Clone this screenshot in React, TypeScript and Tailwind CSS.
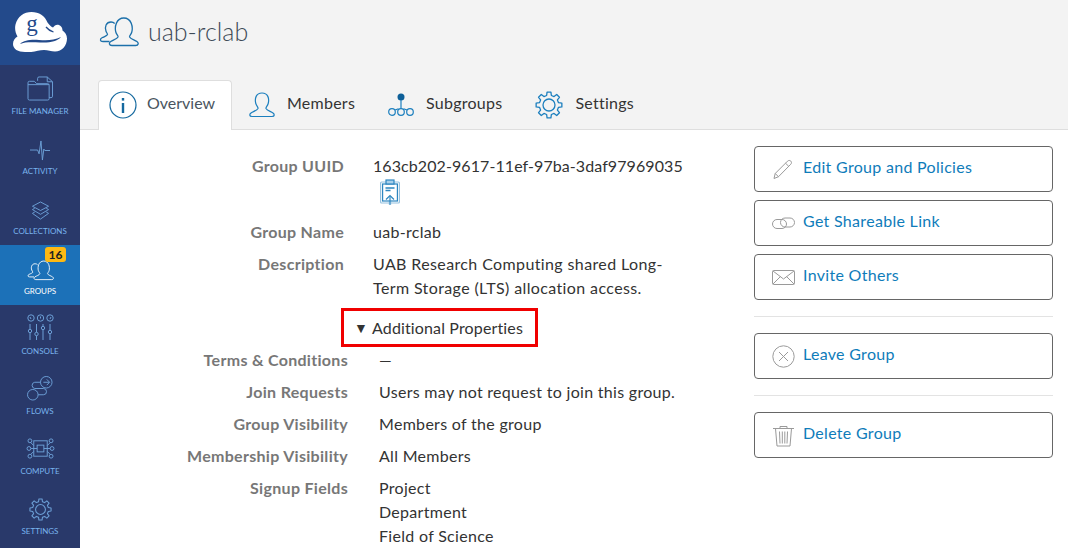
import React from 'react';

const FONT = { fontFamily: '"Lato", "Noto Sans", sans-serif' };

const PeopleIcon: React.FC<{ className?: string }> = ({ className }) => (
    <svg viewBox="0 0 40 30" fill="none" stroke="currentColor" strokeWidth="1.300" className={className}>
        <path d="M10.500 24.500H4c-3.200 0-3.200-2.500-1-3.700 2.500-1.300 5-1.800 5.500-3.300.2-.8-1-1.700-1.500-3.200C5.500 10 7 5 12 5c1.500 0 2.800.5 3.700 1.500" />
        <path d="M13 28.500c-3 0-3.300-2.700-1.300-4 2.500-1.700 6.300-2.500 7.300-4.500.5-1.200-1.500-2.500-2.200-5-1.300-5 .3-14 8-14s9.300 9 8 14c-.7 2.500-2.700 3.800-2.200 5 1 2 4.800 2.800 7.300 4.500 2 1.300 1.700 4-1.300 4z" />
    </svg>
);

// 8 tooth cog outline on a 28 box
const gearPath = (() => {
    const pts: string[] = [];
    for (let i = 0; i < 8; i++) {
        const a = (i * Math.PI) / 4 - Math.PI / 2;
        const step = Math.PI / 8;
        const p = (r: number, t: number) => `${(14 + r * Math.cos(t)).toFixed(2)} ${(14 + r * Math.sin(t)).toFixed(2)}`;
        pts.push(`${i === 0 ? 'M' : 'L'}${p(9.8, a - step * 0.62)}`, `L${p(13, a - step * 0.38)}`, `L${p(13, a + step * 0.38)}`, `L${p(9.8, a + step * 0.62)}`);
    }
    return pts.join(' ') + 'Z';
})();

const GearIcon: React.FC<{ className?: string; strokeWidth?: number }> = ({ className, strokeWidth = 1.300 }) => (
    <svg viewBox="0 0 28 28" fill="none" stroke="currentColor" strokeWidth={strokeWidth} strokeLinejoin="round" className={className}>
        <path d={gearPath} />
        <circle cx="14" cy="14" r="6" />
    </svg>
);

const navItems: { label: string; icon: React.ReactNode; active?: boolean; badge?: string }[] = [
    {
        label: 'File Manager',
        icon: (
            <svg viewBox="0 0 28 26" fill="none" stroke="currentColor" strokeWidth="1" className="w-[27px] h-[25px]">
                <path d="M11 5V2.500A1.500 1.500 0 0 1 12.500 1H21l5.500 5v15a1.500 1.500 0 0 1-1.500 1.500h-2" />
                <path d="M21 1v5h5.500" />
                <path d="M1 7a1.500 1.500 0 0 1 1.500-1.500h5L10 8h11.500A1.500 1.500 0 0 1 23 9.500V23.500a1.500 1.500 0 0 1-1.500 1.500h-19A1.500 1.500 0 0 1 1 23.500z" />
                <path d="M1 9h22" />
            </svg>
        ),
    },
    {
        label: 'Activity',
        icon: (
            <svg viewBox="0 0 22 22" fill="none" stroke="currentColor" strokeWidth="1" className="w-[21px] h-[21px]">
                <path d="M0 10.500h8l1.500 4 2-13.500 1.500 20 1.500-11.500 1 1.500H21" />
            </svg>
        ),
    },
    {
        label: 'Collections',
        icon: (
            <svg viewBox="0 0 20 21" fill="none" stroke="currentColor" strokeWidth="1" className="w-[19px] h-[20px]">
                <path d="M10 1l8.500 4.500L10 10 1.500 5.500z" />
                <path d="M4 7.500L1.500 9 10 14l8.500-5L16 7.500" />
                <path d="M4 11.500L1.500 13 10 19l8.500-6L16 11.500" />
            </svg>
        ),
    },
    { label: 'Groups', active: true, badge: '16', icon: <PeopleIcon className="w-[27px] h-[21px]" /> },
    {
        label: 'Console',
        icon: (
            <svg viewBox="0 0 27 27" fill="none" stroke="currentColor" strokeWidth="1" className="w-[27px] h-[27px]">
                <circle cx="4" cy="4" r="3.200" /><circle cx="13.500" cy="4" r="3.200" /><circle cx="23" cy="4" r="3.200" />
                <path d="M3 3l1 2M13.500 2.500v2M24 3l-1 2" />
                <path d="M3 10v16M9.500 10v16M16 10v16M23 10v16" />
                <circle cx="3" cy="17" r="1.700" fill="#29396a" /><circle cx="9.500" cy="20" r="1.700" fill="#29396a" />
                <circle cx="16" cy="14" r="1.700" fill="#29396a" /><circle cx="23" cy="18" r="1.700" fill="#29396a" />
            </svg>
        ),
    },
    {
        label: 'Flows',
        icon: (
            <svg viewBox="0 0 28 26" fill="none" stroke="currentColor" strokeWidth="1" className="w-[27px] h-[25px]">
                <circle cx="20" cy="6.500" r="6" />
                <circle cx="6" cy="19.500" r="5.500" />
                <path d="M14 6.500H8a3.300 3.300 0 0 0 0 6.500h9a3.200 3.200 0 0 1 0 6.500h-5.500" />
                <path d="M17 6.500h6M20.500 3.500l3 3-3 3" />
            </svg>
        ),
    },
    {
        label: 'Compute',
        icon: (
            <svg viewBox="0 0 30 26" fill="none" stroke="currentColor" strokeWidth="1" className="w-[29px] h-[25px]">
                <rect x="8" y="5" width="14" height="16" />
                <rect x="11.500" y="9.500" width="7" height="7" />
                <path d="M5 13h6.500M18.500 13H25M5 7l3 3M25 7l-3 3M5 19l3-3M25 19l-3-3" />
                <circle cx="4" cy="5" r="2" /><circle cx="26" cy="5" r="2" />
                <circle cx="3" cy="13" r="2" /><circle cx="27" cy="13" r="2" />
                <circle cx="4" cy="21" r="2" /><circle cx="26" cy="21" r="2" />
            </svg>
        ),
    },
    { label: 'Settings', icon: <GearIcon className="w-[23px] h-[23px]" /> },
];

const Sidebar: React.FC = () => (
    <div className="w-20 shrink-0 bg-[#29396a] flex flex-col">
        <div className="h-[65px] pl-[13px] pb-[1px] bg-[#234a8b] flex items-center">
            <svg viewBox="0 0 54 40" className="w-[54px] h-[40px]">
                <path fill="#fff" d="M12 40C5 40 0 37 0 32c0-3.500 2-6 4.500-7.500C2.500 21 1.500 17 2.500 12.500 4.500 4.500 11 0 18.500 0 26 0 32 4 34.500 10.500c1.500 2 3.500 4.500 5.500 5 1.500-2 3.500-3.500 6-2.500 2.500 1 3.500 3 3.500 5.500 2.500 1.500 4.500 4.500 4.500 8 0 7-5 13-12 13-4 0-7-1.500-11-1.500-6 0-11 2.500-19 2.500z" />
                <path fill="#234a8b" d="M7 32c4-4 11-4.500 19-4s15 .5 22-3c-4 4.500-11 6-21 5.500-8-.4-15-.7-20 1.500z" />
                <path fill="none" stroke="#234a8b" strokeWidth="1.300" d="M33 15c2 2.500 4 4 7.500 5" />
                <text x="19" y="19" fontSize="23" textAnchor="middle" fill="#234a8b" style={{ fontFamily: '"Liberation Serif", serif' }}>g</text>
            </svg>
        </div>
        {navItems.map(item => (
            <div
                key={item.label}
                className={`relative h-[60px] flex flex-col items-center justify-end pb-[9px] ${item.active ? 'bg-[#1c71b8] text-white' : 'text-[#6c9fd6]'}`}
            >
                {item.badge && (
                    <span className="absolute top-[2px] left-[45px] w-[21px] h-[15px] rounded-[3px] bg-[#fdb913] text-[#222] text-[12px] font-bold leading-[15px] text-center">
                        {item.badge}
                    </span>
                )}
                <div className="flex-1 flex items-end justify-center pb-[5px]">{item.icon}</div>
                <span className={`uppercase text-[8px] leading-[10px] ${item.active ? 'text-white' : 'text-[#79b4ee]'}`}>{item.label}</span>
            </div>
        ))}
    </div>
);

const tabs = [
    {
        label: 'Overview',
        active: true,
        icon: (
            <svg viewBox="0 0 28 28" className="w-[28px] h-[28px] text-[#15699f]" fill="none" stroke="currentColor">
                <circle cx="14" cy="14" r="13" strokeWidth="1.200" />
                <rect x="12.800" y="12" width="2.400" height="10" fill="currentColor" stroke="none" />
                <rect x="12.800" y="7" width="2.400" height="2.600" fill="currentColor" stroke="none" />
            </svg>
        ),
    },
    {
        label: 'Members',
        icon: (
            <svg viewBox="0 0 26 26" className="w-[26px] h-[26px] text-[#1c7fbe]" fill="none" stroke="currentColor" strokeWidth="1.200">
                <path d="M3 24.500c-3 0-2.500-2.500-1-3.500 2.500-1.700 6-2.500 7-4.500.5-1.200-1.500-2.500-2.200-5C5.500 6.500 7 1 13 1s7.500 5.500 6.200 10.500c-.7 2.500-2.700 3.800-2.200 5 1 2 4.500 2.800 7 4.500 1.500 1 2 3.500-1 3.500z" />
            </svg>
        ),
    },
    {
        label: 'Subgroups',
        icon: (
            <svg viewBox="0 0 26 26" className="w-[26px] h-[26px] text-[#1c7fbe]" fill="none" stroke="currentColor" strokeWidth="1.200">
                <circle cx="13" cy="5" r="3.500" fill="#0d5f98" stroke="none" />
                <path d="M13 8v8.700M7 18l3.500-1.300M19 18l-3.500-1.300" />
                <circle cx="4" cy="20" r="3.300" /><circle cx="13" cy="20" r="3.300" /><circle cx="22" cy="20" r="3.300" />
            </svg>
        ),
    },
    { label: 'Settings', icon: <GearIcon className="w-[28px] h-[28px] text-[#1c7fbe]" /> },
];

const Tabs: React.FC = () => (
    <div className="h-[50px] pl-[18px] flex border-b border-[#dedede]">
        {tabs.map(tab => (
            <div
                key={tab.label}
                className={
                    tab.active
                        ? 'h-[50px] w-[134px] pl-[10px] pb-[1px] flex items-center gap-[10px] bg-white border border-b-0 border-[#dedede] rounded-t-[4px] text-[#4a5560]'
                        : 'h-[49px] pl-[17px] pr-[16px] flex items-center gap-[12px] text-[#333] tracking-[0.25px]'
                }
            >
                {tab.icon}
                <span className="text-[16px] pb-[4px]">{tab.label}</span>
            </div>
        ))}
    </div>
);

const Row: React.FC<{ label: string; labelClass: string; children: React.ReactNode; className?: string }> = ({ label, labelClass, children, className = 'mb-2' }) => (
    <div className={`flex text-[16px] leading-[24px] tracking-[0.3px] ${className}`}>
        <div className={`shrink-0 text-right font-bold text-[#777] ${labelClass}`}>{label}</div>
        <div className="text-[#333]">{children}</div>
    </div>
);

const actionGroups = [
    [
        {
            label: 'Edit Group and Policies',
            icon: (
                <path d="M2 20.500l1.200-5L15.500 3.200c1-1 2.500-1 3.300-.1.900.9.900 2.200 0 3.100L6.500 18.700zM3.200 15.500l3.300 3.200M13.500 5.200l3.300 3.200" />
            ),
        },
        {
            label: 'Get Shareable Link',
            icon: (
                <>
                    <rect x="0.500" y="7.500" width="14" height="9" rx="4.500" />
                    <rect x="8.500" y="6" width="14" height="9" rx="4.500" />
                </>
            ),
        },
        {
            label: 'Invite Others',
            icon: (
                <>
                    <rect x="0.500" y="4.500" width="22" height="14" rx="1" />
                    <path d="M1 5l10.500 8L22 5M1 18l7.500-7.500M22 18l-7.500-7.500" />
                </>
            ),
        },
    ],
    [
        {
            label: 'Leave Group',
            icon: (
                <>
                    <circle cx="11.500" cy="11.500" r="10.700" />
                    <path d="M7 7l9 9M16 7l-9 9" />
                </>
            ),
        },
    ],
    [
        {
            label: 'Delete Group',
            icon: (
                <>
                    <path d="M1 4.500h21M8 4.500V2.500h7v2M3.500 4.500l1.500 17.500h13l1.500-17.500" />
                    <path d="M7.500 7.500l.5 12M10.300 7.500v12M12.800 7.500v12M15.500 7.500l-.5 12" />
                </>
            ),
        },
    ],
];

const Actions: React.FC = () => (
    <div className="w-[299px] flex flex-col">
        {actionGroups.map((group, i) => (
            <div key={i} className={i > 0 ? 'border-t border-[#e3e3e3] mt-4 pt-4' : ''}>
                <div className="flex flex-col gap-2">
                    {group.map(action => (
                        <div key={action.label} className="h-[46px] pl-[17px] flex items-center gap-[8px] border border-[#666] rounded-[4px] text-[16px] tracking-[0.3px] text-[#0f7cba]">
                            <svg viewBox="0 0 23 23" className="w-[23px] h-[23px] text-[#9a9a9a]" fill="none" stroke="currentColor" strokeWidth="1">
                                {action.icon}
                            </svg>
                            <span className="pb-[4px]">{action.label}</span>
                        </div>
                    ))}
                </div>
            </div>
        ))}
    </div>
);

const App: React.FC = () => (
    <div className="h-[548px] w-[1068px] flex overflow-hidden bg-white" style={FONT}>
        <Sidebar />
        <div className="flex-1 min-w-0 flex flex-col">
            <div className="bg-[#f3f3f3]">
                <div className="h-[80px] pl-[19px] pb-[16px] flex items-center gap-[9px]">
                    <PeopleIcon className="w-[40px] h-[30px] text-[#1c70aa]" />
                    <h1 className="text-[25px] font-light text-[#3d4a57]">uab-rclab</h1>
                </div>
                <Tabs />
            </div>
            <div className="flex-1 flex pt-[24px]">
                <div className="w-[674px] shrink-0">
                    <Row label="Group UUID" labelClass="w-[264px] mr-[29px]" className="mb-[15px]">
                        <div className="tracking-[0.08px]">163cb202-9617-11ef-97ba-3daf97969035</div>
                        <svg viewBox="0 0 20 26" className="w-[20px] h-[26px] mt-[1px] ml-[7px] text-[#2d86c0]" fill="none" stroke="currentColor" strokeWidth="1.200">
                            <rect x="0.600" y="3" width="18.800" height="21" rx="1" opacity="0.5" />
                            <rect x="2.600" y="5" width="14.800" height="17" />
                            <rect x="6" y="1" width="8" height="4" fill="#a9d0ea" />
                            <path d="M5.500 9h9M5.500 11.500h5" strokeWidth="1.500" />
                            <path d="M10 26v-9" strokeWidth="2.200" opacity="0.6" />
                            <path d="M6 20.500l4-4 4 4" />
                        </svg>
                    </Row>
                    <Row label="Group Name" labelClass="w-[264px] mr-[29px]">uab-rclab</Row>
                    <Row label="Description" labelClass="w-[264px] mr-[29px]">
                        <div className="w-[310px] tracking-[0.38px]">UAB Research Computing shared Long-Term Storage (LTS) allocation access.</div>
                    </Row>
                    <div className="ml-[261px] mt-[8px] w-[197px] h-[39px] pl-[13px] border-[3px] border-[#f00000] flex items-center text-[16px] tracking-[0.14px] text-[#333]">
                        <span className="text-[14px] mr-[4px] -ml-[3px]">▼</span>Additional Properties
                    </div>
                    <div className="pt-[1px]">
                        <Row label="Terms & Conditions" labelClass="w-[268px] mr-[31px]">—</Row>
                        <Row label="Join Requests" labelClass="w-[268px] mr-[31px]">Users may not request to join this group.</Row>
                        <Row label="Group Visibility" labelClass="w-[268px] mr-[31px]">Members of the group</Row>
                        <Row label="Membership Visibility" labelClass="w-[268px] mr-[31px]">All Members</Row>
                        <Row label="Signup Fields" labelClass="w-[268px] mr-[31px]">
                            <div>Project</div>
                            <div>Department</div>
                            <div>Field of Science</div>
                        </Row>
                    </div>
                </div>
                <div className="-mt-[8px]">
                    <Actions />
                </div>
            </div>
        </div>
    </div>
);

export default App;
